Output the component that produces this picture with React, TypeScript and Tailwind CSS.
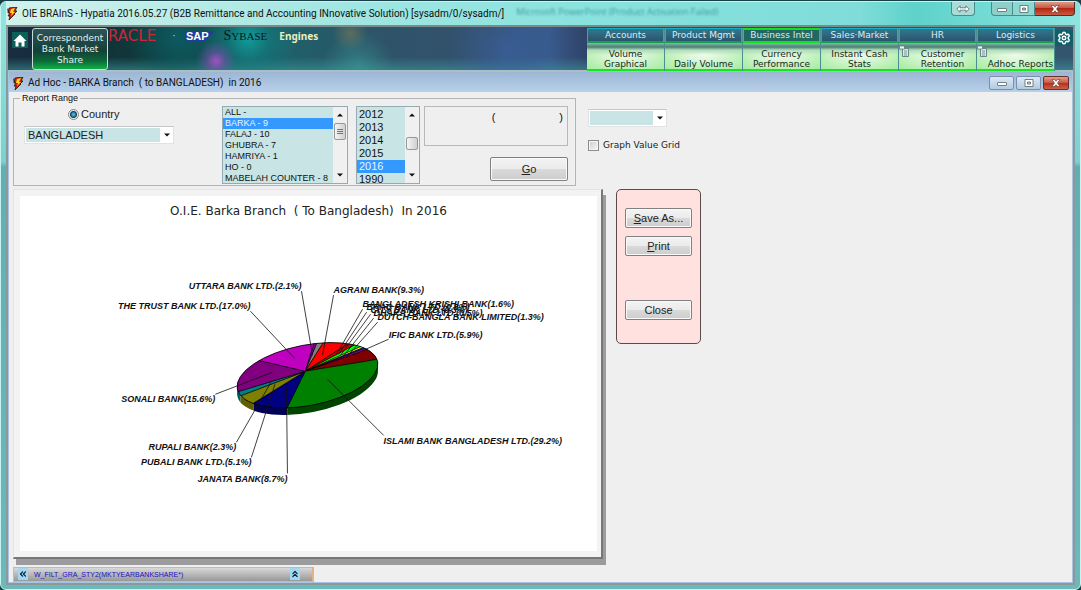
import React from 'react';
import { ChevronsLeft, ChevronsUp, Settings } from 'lucide-react';

const modules = [
  { tab: 'Accounts', item: 'Volume Graphical' },
  { tab: 'Product Mgmt', item: 'Daily Volume' },
  { tab: 'Business Intel', item: 'Currency Performance', active: true },
  { tab: 'Sales·Market', item: 'Instant Cash Stats' },
  { tab: 'HR', item: 'Customer Retention', doc: true },
  { tab: 'Logistics', item: 'Adhoc Reports', doc: true },
];

const branches = ['ALL -', 'BARKA - 9', 'FALAJ - 10', 'GHUBRA - 7', 'HAMRIYA - 1', 'HO - 0', 'MABELAH COUNTER - 8'];
const years = ['2012', '2013', '2014', '2015', '2016', '1990'];

const apex = [305.7, 371];
const slices: { fill: string; from: number[]; to: number[] }[] = [
  { fill: '#8000a0', from: [314, 344.7], to: [317, 344] },
  { fill: '#808080', from: [317, 344], to: [323, 343.7] },
  { fill: '#ff0000', from: [323, 343.7], to: [347, 344.5] },
  { fill: '#d00000', from: [347, 344.5], to: [352.7, 346] },
  { fill: '#00ff00', from: [352.7, 346], to: [358.5, 347.5] },
  { fill: '#ffff00', from: [358.5, 347.5], to: [361, 348.5] },
  { fill: '#2020e0', from: [361, 348.5], to: [362.5, 349.2] },
  { fill: '#c000c0', from: [362.5, 349.2], to: [365, 350.2] },
  { fill: '#800000', from: [365, 350.2], to: [376.7, 359.3] },
  { fill: '#008000', from: [376.7, 359.3], to: [288, 406.7] },
  { fill: '#000080', from: [288, 406.7], to: [254.3, 402.7] },
  { fill: '#808000', from: [254.3, 402.7], to: [241.7, 395.3] },
  { fill: '#008080', from: [241.7, 395.3], to: [238.7, 391.3] },
  { fill: '#800080', from: [238.7, 391.3], to: [261.7, 360.7] },
  { fill: '#c000c0', from: [261.7, 360.7], to: [314, 344.7] },
];

const labels: { text: string; x: number; y: number; end?: boolean; line: number[] }[] = [
  { text: 'UTTARA BANK LTD.(2.1%)', x: 302, y: 289, end: true, line: [302, 291, 313, 355] },
  { text: 'THE TRUST BANK LTD.(17.0%)', x: 251, y: 309, end: true, line: [251, 311, 295, 358] },
  { text: 'SONALI BANK(15.6%)', x: 216, y: 402, end: true, line: [216, 394, 273, 372] },
  { text: 'RUPALI BANK(2.3%)', x: 237, y: 450, end: true, line: [237, 442, 271.5, 382] },
  { text: 'PUBALI BANK LTD.(5.1%)', x: 252, y: 465, end: true, line: [252, 457, 275.5, 384] },
  { text: 'JANATA BANK(8.7%)', x: 288, y: 482, end: true, line: [288, 473, 287, 387] },
  { text: 'ISLAMI BANK BANGLADESH LTD.(29.2%)', x: 384, y: 444, line: [384, 435, 328, 379] },
  { text: 'IFIC BANK LTD.(5.9%)', x: 389, y: 338, line: [389, 339, 355, 354] },
  { text: 'AGRANI BANK(9.3%)', x: 334, y: 293, line: [334, 295, 323, 355] },
  { text: 'BANGLADESH KRISHI BANK(1.6%)', x: 363, y: 307, line: [363, 309, 337, 354] },
  { text: 'BRAC BANK LTD.(0.8%)', x: 367, y: 310, line: [367, 312, 339, 354] },
  { text: 'CITY BANK LTD.(0.3%)', x: 371, y: 313, line: [371, 314, 341, 355] },
  { text: 'DHAKA BANK LTD.(0.5%)', x: 374, y: 316, line: [374, 318, 343, 357] },
  { text: 'DUTCH-BANGLA BANK LIMITED(1.3%)', x: 378, y: 320, line: [378, 322, 346, 358] },
];

const reach = (p: number[]) => [apex[0] + (p[0] - apex[0]) * 1.6, apex[1] + (p[1] - apex[1]) * 1.6];
const corner = (a: number[], b: number[]) => {
  const m = [(a[0] + b[0]) / 2, (a[1] + b[1]) / 2];
  return [apex[0] + (m[0] - apex[0]) * 4, apex[1] + (m[1] - apex[1]) * 4];
};

function PieChart() {
  return (
    <svg viewBox="21 220 576 330" className="block w-full" role="img" aria-label="Bank market share">
      <defs>
        <clipPath id="top">
          <ellipse cx="308" cy="375" rx="71.4" ry="30.2" transform="rotate(-11 308 375)" />
        </clipPath>
        <clipPath id="side">
          <ellipse cx="308" cy="377" rx="71.4" ry="30.2" transform="rotate(-11 308 377)" />
          <ellipse cx="308" cy="379" rx="71.4" ry="30.2" transform="rotate(-11 308 379)" />
          <ellipse cx="308" cy="382" rx="71.4" ry="30.2" transform="rotate(-11 308 382)" />
        </clipPath>
      </defs>
      <g clipPath="url(#side)">
        <rect x="288" y="340" width="100" height="90" fill="#004400" />
        <rect x="254" y="340" width="34" height="90" fill="#000058" />
        <rect x="241" y="340" width="13" height="90" fill="#606000" />
        <rect x="230" y="340" width="11" height="90" fill="#006060" />
      </g>
      <g clipPath="url(#top)" stroke="#000" strokeWidth="0.6">
        {slices.map((s, i) => {
          const a = reach(s.from);
          const b = reach(s.to);
          const big = Math.hypot(s.from[0] - s.to[0], s.from[1] - s.to[1]) > 90;
          const mid = big ? [430, 460] : corner(s.from, s.to);
          return <polygon key={i} fill={s.fill} points={`${apex} ${a} ${mid} ${b}`} />;
        })}
      </g>
      <ellipse cx="308" cy="375" rx="71.4" ry="30.2" transform="rotate(-11 308 375)" fill="none" stroke="#000" strokeWidth="0.8" />
      <g stroke="#111" strokeWidth="0.8">
        {labels.map((l) => (
          <line key={l.text} x1={l.line[0]} y1={l.line[1]} x2={l.line[2]} y2={l.line[3]} />
        ))}
      </g>
      <g className="fill-[#111] font-['Liberation_Sans',sans-serif] text-[9px] font-bold italic">
        {labels.map((l) => (
          <text key={l.text} x={l.x} y={l.y} textAnchor={l.end ? 'end' : 'start'}>
            {l.text}
          </text>
        ))}
      </g>
    </svg>
  );
}

function AppIcon() {
  return (
    <svg viewBox="0 0 12 13" className="h-[13px] w-3 shrink-0" aria-hidden="true">
      <path d="M3 1 11 0 9 4H11L8 7H9L3 13 4 9H2L4 6H2Z" fill="#d81e10" stroke="#301008" strokeWidth="0.8" />
      <path d="M5 2 9 1 7 5 9 5 5 9 6 6H4Z" fill="#ffd820" />
      <path d="M1 1 3 4 2 6Z" fill="#222" />
    </svg>
  );
}

function Arrow({ up = false }: { up?: boolean }) {
  return (
    <svg viewBox="0 0 6 4" className="h-1 w-1.5" aria-hidden="true">
      <path d={up ? 'M0 3.5 3 .5 6 3.5Z' : 'M0 .5 3 3.5 6 .5Z'} fill="#111" />
    </svg>
  );
}

function Combo({ label, value, className }: { label: string; value: string; className: string }) {
  return (
    <div className={`flex items-center border border-[#e2e2e4] border-t-[#c4c8cc] bg-white ${className}`}>
      <select
        aria-label={label}
        className="h-full min-w-0 flex-1 appearance-none border border-white bg-[#c9e4e4] px-0.5 font-['Liberation_Sans',sans-serif] text-[11px] leading-none text-[#222] outline-none"
      >
        <option>{value}</option>
      </select>
      <span className="flex w-3 justify-center">
        <Arrow />
      </span>
    </div>
  );
}

function ScrollBar({ thumb, grip = false }: { thumb: string; grip?: boolean }) {
  return (
    <div className="flex w-[14px] flex-col items-center bg-[#f0f0f0] py-1.5">
      <Arrow up />
      <span
        className={`flex w-3 items-center justify-center rounded-[2px] border border-[#979797] bg-gradient-to-r from-[#f5f5f5] to-[#cfcfcf] ${thumb}`}
      >
        {grip && (
          <svg viewBox="0 0 6 7" className="h-[7px] w-1.5" aria-hidden="true">
            <path d="M0 1.500H6M0 3.500H6M0 5.500H6" stroke="#666" strokeWidth="0.9" />
          </svg>
        )}
      </span>
      <span className="flex-1" />
      <Arrow />
    </div>
  );
}

const optionBase = 'block p-0 px-0.5 overflow-hidden';
const optionOn = 'bg-[linear-gradient(#3399ff,#3399ff)] [-webkit-text-fill-color:#e8f4ff]';

function WinButton({ kind, label, className }: { kind: string; label: string; className: string }) {
  const close = kind === 'close';
  return (
    <button type="button" aria-label={label} className={`flex items-center justify-center border ${className}`}>
      <svg viewBox="0 0 14 10" className="h-2.5 w-3.5" aria-hidden="true">
        {kind === 'min' && <rect x="2.5" y="4.5" width="9" height="3" rx="0.5" fill="#fff" stroke="#566" strokeWidth="0.8" />}
        {kind === 'max' && (
          <path d="M3 1.5H11V8.5H3ZM5.5 4H8.5V6H5.5Z" fill="#fff" fillRule="evenodd" stroke="#566" strokeWidth="0.8" />
        )}
        {kind === 'move' && (
          <path d="M.8 5 4 1.8V3.8H10V1.8L13.2 5 10 8.2V6.2H4V8.2Z" fill="#fff" stroke="#566" strokeWidth="0.8" />
        )}
        {close && (
          <path d="M3 1.5H5.5L7 3.3 8.5 1.5H11L8.5 5 11 8.5H8.5L7 6.7 5.5 8.5H3L5.5 5Z" fill="#fff" stroke="#533" strokeWidth="0.6" />
        )}
      </svg>
    </button>
  );
}

const pushButton =
  "flex items-center justify-center rounded-[2px] border border-[#808080] bg-[linear-gradient(#f3f3f3,#ebebeb_50%,#dadada_50%,#cdcdcd)] shadow-[inset_0_0_0_1px_#fafafa] font-['Liberation_Sans',sans-serif] text-[11px] leading-none text-[#222]";

export default function App() {
  return (
    <div className="flex min-h-screen flex-col bg-[#173f46] pt-px font-['Liberation_Sans',sans-serif] text-[#111]">
      <div className="flex flex-1 flex-col rounded-t-md rounded-b-md border border-[#c8f4f0] bg-[linear-gradient(#86dfdc,#8ee4e0_20px,#7dd0cd_160px,#63aeb2_165px,#6cb8ba)] px-[5px] pb-1">
        <header className="flex h-[23px] items-start justify-between bg-[linear-gradient(90deg,#d2f2ec,#a4e6e2_30%,#88e2de_55%,#7fdcd8_80%,#5ed2cb_85%,#8ce4df)]">
          <div className="flex h-full items-center gap-1">
            <AppIcon />
            <h1 className="whitespace-pre font-[Roboto,sans-serif] text-[10px] leading-4">
              OIE BRAInS - Hypatia 2016.05.27 (B2B Remittance and Accounting INnovative Solution) [sysadm/0/sysadm/]
            </h1>
            <span className="-mt-1 ml-2 whitespace-nowrap font-['Open_Sans',sans-serif] text-[9px] leading-none text-[#3f9a98] blur-[1px]">
              Microsoft PowerPoint (Product Activation Failed)
            </span>
          </div>
          <div className="flex">
            <WinButton kind="move" label="Move" className="mr-4 h-[14px] w-6 rounded-b border-t-0 border-[#4a8a8a] bg-[#a8dcd8]" />
            <WinButton kind="min" label="Minimize" className="h-[14px] w-[22px] rounded-bl border-t-0 border-[#4a8a8a] bg-[#8ccfcb]" />
            <WinButton kind="max" label="Maximize" className="h-[14px] w-[22px] border-t-0 border-l-0 border-[#4a8a8a] bg-[#8ed8d2]" />
            <WinButton kind="close" label="Close window" className="h-[14px] w-10 rounded-br border-t-0 border-l-0 border-[#5a2a24] bg-[linear-gradient(#dd9a8a,#c8503c_50%,#b02810_50%,#cc5a40)]" />
          </div>
        </header>

        <div className="flex flex-1 flex-col border-2 border-[#8a9a9a] border-t-[#7c8a8a] bg-[#efefef]">
          <nav className="flex h-[45px] items-start justify-between border-b-2 border-[#a8c0c4] bg-[radial-gradient(circle_at_208px_34px,#a050c0_0,#7a50b088_9px,transparent_20px),radial-gradient(circle_at_240px_12px,#109a9a_0,#0f858888_22px,transparent_48px),radial-gradient(circle_at_170px_10px,#0c5a60_0,transparent_50px),radial-gradient(circle_at_342px_6px,#7a7a5899_0,transparent_18px),radial-gradient(circle_at_350px_40px,#3a9a9899_0,transparent_36px),radial-gradient(circle_at_500px_24px,#3a62a0aa_0,transparent_60px),linear-gradient(transparent_70%,#3f9ba088),linear-gradient(90deg,#182c40_0,#123038_80px,#103c3c_150px,#1f6068_280px,#2e5468_370px,#34506e_480px,#38598a_540px,#2f4468_578px,#33566f)] pt-px">
            <div className="flex items-start">
              <button type="button" aria-label="Home" className="mt-1 ml-1 flex h-4 w-4 items-center justify-center bg-[#0c6058]">
                <svg viewBox="0 0 14 13" className="h-[13px] w-3.5" aria-hidden="true">
                  <path d="M7 .5 13.500 7H11.500V12.500H8.500V8.500H5.500V12.500H2.500V7H.5Z" fill="#fff" />
                </svg>
              </button>
              <button
                type="button"
                className="ml-1 h-[42px] w-[76px] rounded-[3px] border border-[#c8dcd8] bg-[linear-gradient(#2c5458,#144038_55%,#0c6a38_80%,#10b048)] px-0.5 text-center font-['DejaVu_Sans',sans-serif] text-[9px] leading-[11px] text-[#e4f0f0]"
              >
                Correspondent Bank Market Share
              </button>
              <div className="flex h-4 items-center whitespace-nowrap">
                <span className="font-['DejaVu_Sans',sans-serif] text-[15px] leading-none text-[#c82838]">RACLE</span>
                <span className="ml-4 text-[10px] leading-none text-[#c0d8d8]">·</span>
                <svg viewBox="0 0 30 12" className="ml-2.5 h-3 w-[30px]" role="img" aria-label="SAP">
                  <path d="M0 1H30L20 11H0Z" fill="#1c3f9c" />
                  <text x="1" y="10" fill="#fff" className="font-['Liberation_Sans',sans-serif] text-[11px] font-bold">SAP</text>
                </svg>
                <span className="ml-2 font-['Liberation_Serif',serif] text-[14px] leading-none text-[#081818]">
                  S<span className="text-[11px]">YBASE</span>
                </span>
                <a href="#engines" className="ml-3 font-['Noto_Sans',sans-serif] text-[10px] leading-none font-bold text-[#e8eec0]">Engines</a>
              </div>
            </div>
            <div className="flex items-start">
              <ul className="flex">
                {modules.map((m) => (
                  <li key={m.tab} className="w-[78px] border-r border-[#4d8f8c] font-['DejaVu_Sans',sans-serif] text-[9px] text-[#18281c]">
                    <button
                      type="button"
                      className={`block h-[15px] w-full border border-b-2 text-center whitespace-nowrap text-[#dcecf0] ${
                        m.active
                          ? 'border-[#10e020] border-t-2 bg-[#226860] leading-[11px]'
                          : 'border-[#18b0c4] border-b-[#10a050] bg-[linear-gradient(#30788c,#2c5470)] leading-[13px]'
                      }`}
                    >
                      {m.tab}
                    </button>
                    <button
                      type="button"
                      className="flex h-7 w-full items-end border-b-2 border-[#10e820] bg-[linear-gradient(#88b8a0,#4a8078_4px,#b0dcb8_7px,transparent_12px),radial-gradient(ellipse_at_50%_40%,#f4fcf0,#a4eca0)] pt-0.5 leading-[10px]"
                    >
                      {m.doc && (
                        <svg viewBox="0 0 10 12" className="h-3 w-2.5 shrink-0 self-start" aria-hidden="true">
                          <path d="M3.500 3.500H9.500V11.500H3.500Z" fill="#dce8e4" stroke="#688" />
                          <path d="M.5 1H5.500V4H.5ZM5 6H8M5 8H8M5 10H8" fill="#eef4f4" stroke="#577" strokeWidth="0.7" />
                        </svg>
                      )}
                      <span className="flex-1 text-center">{m.item}</span>
                    </button>
                  </li>
                ))}
              </ul>
              <button type="button" aria-label="Settings" className="mt-0.5 flex h-4 w-[18px] items-center justify-center bg-[#0f6068]">
                <Settings className="h-3.5 w-3.5 text-white" strokeWidth={2.5} />
              </button>
            </div>
          </nav>

          <main className="flex flex-1 flex-col border border-t-0 border-[#a8c4e0]">
            <div className="flex h-5 items-center justify-between bg-[linear-gradient(#9cb6d4,#b8d0ea)] px-[3px] pt-0.5">
              <div className="flex items-center gap-1">
                <AppIcon />
                <h2 className="whitespace-pre font-[Roboto,sans-serif] text-[10px] leading-4">Ad Hoc - BARKA Branch  ( to BANGLADESH)  in 2016</h2>
              </div>
              <div className="flex gap-0.5">
                <WinButton kind="min" label="Minimize report" className="h-[14px] w-[25px] rounded-[2px] border-[#7890ac] bg-[linear-gradient(#dce8f4,#b4cae2)]" />
                <WinButton kind="max" label="Maximize report" className="h-[14px] w-[25px] rounded-[2px] border-[#7890ac] bg-[linear-gradient(#dce8f4,#b4cae2)]" />
                <WinButton kind="close" label="Close report" className="h-[14px] w-[26px] rounded-[2px] border-[#6a3028] bg-[linear-gradient(#e0a090,#c8543e_50%,#b43018_50%,#cc6048)]" />
              </div>
            </div>

            <div className="flex flex-1 flex-col items-start px-1">
              <div className="flex items-start">
                <fieldset className="flex h-[94px] w-[563px] border border-[#b4b4b4] px-1">
                  <legend className="ml-0.5 px-0.5 text-[9px] leading-3">Report Range</legend>
                  <div className="flex w-full items-start pt-0.5">
                    <div className="ml-1.5 flex w-[150px] flex-col">
                      <label className="flex h-4 items-center gap-0.5 pl-11 text-[11px] leading-none text-[#222]">
                        <input
                          type="radio"
                          name="range"
                          defaultChecked
                          className="h-[11px] w-[11px] appearance-none rounded-full border border-[#888] bg-[radial-gradient(circle,#3cb0e0_1px,#163c58_3px,#e8e8e8_4px)]"
                        />
                        Country
                      </label>
                      <Combo label="Country" value="BANGLADESH" className="mt-1 h-[18px] w-full" />
                    </div>
                    <div className="ml-12 flex h-[78px] w-[126px] border border-[#96aab4] bg-[#c9e4e4]">
                      <select
                        aria-label="Branch"
                        size={7}
                        defaultValue="BARKA - 9"
                        className="h-full min-w-0 flex-1 overflow-hidden rounded-none bg-[#c9e4e4] p-0 text-[9px] outline-none"
                      >
                        {branches.map((b) => (
                          <option key={b} className={`${optionBase} h-[11px] min-h-0 leading-[11px] ${b === 'BARKA - 9' ? optionOn : ''}`}>
                            {b}
                          </option>
                        ))}
                      </select>
                      <ScrollBar grip thumb="mt-1.5 h-[17px]" />
                    </div>
                    <div className="ml-2 flex h-[78px] w-16 border border-[#96aab4] bg-[#c9e4e4]">
                      <select
                        aria-label="Year"
                        size={6}
                        defaultValue="2016"
                        className="h-full min-w-0 flex-1 overflow-hidden rounded-none bg-[#c9e4e4] p-0 pt-px text-[11px] outline-none"
                      >
                        {years.map((y) => (
                          <option key={y} className={`${optionBase} h-[13px] min-h-0 leading-[13px] ${y === '2016' ? optionOn : ''}`}>
                            {y}
                          </option>
                        ))}
                      </select>
                      <ScrollBar thumb="mt-5 h-[13px]" />
                    </div>
                    <div className="ml-1 flex w-36 flex-col items-end">
                      <div className="flex h-10 w-full justify-end gap-16 border border-[#b8b8b8] px-1 pt-1 text-[11px] leading-3">
                        <span>(</span>
                        <span>)</span>
                      </div>
                      <button type="button" className={`mt-[11px] h-6 w-[78px] ${pushButton}`}>
                        <span className="underline">G</span>o
                      </button>
                    </div>
                  </div>
                </fieldset>
                <div className="ml-3 flex flex-col items-start pt-[17px]">
                  <Combo label="Graph style" value="" className="h-[18px] w-[79px]" />
                  <label className="mt-3 flex items-center gap-1 font-['DejaVu_Sans',sans-serif] text-[9px] leading-3 text-[#222]">
                    <input type="checkbox" className="h-[11px] w-[11px] appearance-none border border-[#8c8c8c] bg-[linear-gradient(135deg,#ccc,#f8f8f8)] shadow-[inset_0_0_0_1px_#f4f4f4]" />
                    Graph Value Grid
                  </label>
                </div>
              </div>

              <div className="mt-[3px] flex items-start">
                <section className="w-[590px] border-t border-r-2 border-b-2 border-l border-t-[#e4e4e4] border-r-[#777] border-b-[#777] border-l-[#e4e4e4] bg-[#f3f3f3] p-1.5 pr-1 shadow-[3px_6px_0_#9c9c9f]">
                  <div className="bg-white">
                    <h3 className="h-6 pt-2 text-center font-['DejaVu_Sans',sans-serif] text-[12px] leading-[14px] whitespace-pre text-[#222]">
                      O.I.E. Barka Branch  ( To Bangladesh)  In 2016
                    </h3>
                    <PieChart />
                  </div>
                </section>
                <aside className="ml-[13px] flex h-[155px] w-[85px] flex-col items-center rounded-[5px] border border-[#5a4a4a] bg-[#ffe1df] pt-[18px]">
                  <button type="button" className={`h-5 w-[67px] ${pushButton}`}>
                    <span className="underline">S</span>ave As...
                  </button>
                  <button type="button" className={`mt-2 h-5 w-[67px] ${pushButton}`}>
                    <span className="underline">P</span>rint
                  </button>
                  <button type="button" className={`mt-11 h-5 w-[67px] ${pushButton}`}>
                    Close
                  </button>
                </aside>
              </div>

              <footer className="mt-2 flex h-[15px] w-[301px] items-center border border-r-2 border-[#eab080] bg-[linear-gradient(#d8d8d8,#b8b8b8_50%,#989898)] px-1 leading-none text-[#2010c8]">
                <button type="button" aria-label="Previous" className="flex h-3 w-2.5 items-center justify-center bg-[#a0d8f4] text-[#102030]">
                  <ChevronsLeft className="h-2.5 w-2.5" strokeWidth={3} />
                </button>
                <span className="ml-1.5 flex-1 text-[7px]">W_FILT_GRA_STY2(MKTYEARBANKSHARE*)</span>
                <button type="button" aria-label="Expand" className="mr-2 flex h-3 w-2.5 items-center justify-center bg-[#a0d8f4] text-[#102030]">
                  <ChevronsUp className="h-2.5 w-2.5" strokeWidth={3} />
                </button>
              </footer>
            </div>
          </main>
        </div>
      </div>
    </div>
  );
}
